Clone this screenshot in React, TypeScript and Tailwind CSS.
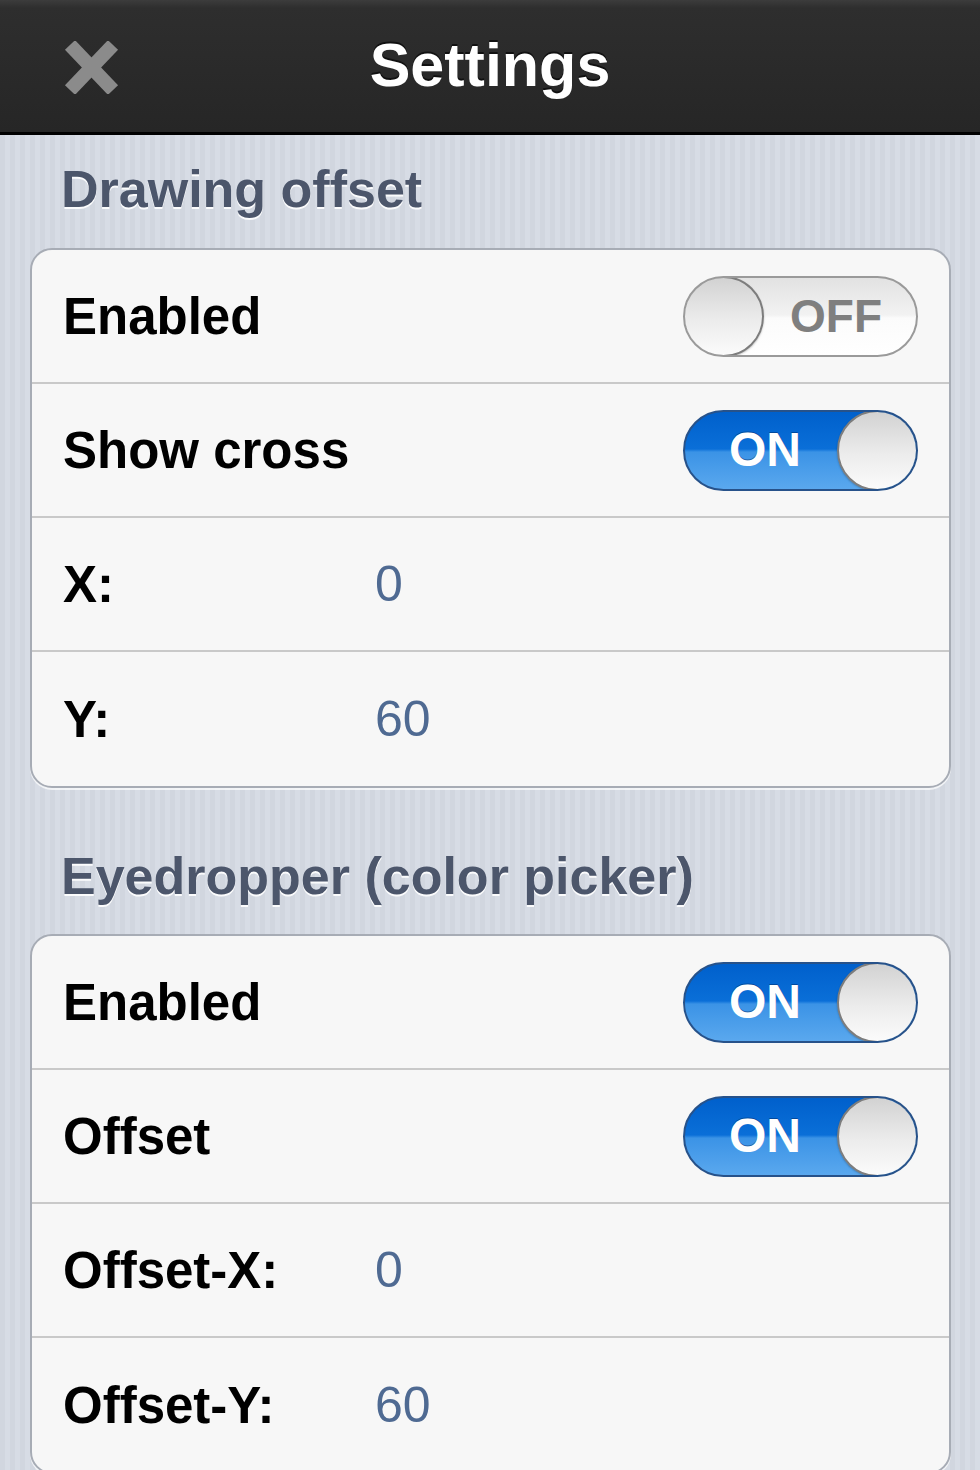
import React from 'react';

type Row =
    | { kind: 'toggle'; label: string; on: boolean }
    | { kind: 'value'; label: string; value: string };

const sections: { title: string; rows: Row[] }[] = [
    {
        title: 'Drawing offset',
        rows: [
            { kind: 'toggle', label: 'Enabled', on: false },
            { kind: 'toggle', label: 'Show cross', on: true },
            { kind: 'value', label: 'X:', value: '0' },
            { kind: 'value', label: 'Y:', value: '60' },
        ],
    },
    {
        title: 'Eyedropper (color picker)',
        rows: [
            { kind: 'toggle', label: 'Enabled', on: true },
            { kind: 'toggle', label: 'Offset', on: true },
            { kind: 'value', label: 'Offset-X:', value: '0' },
            { kind: 'value', label: 'Offset-Y:', value: '60' },
        ],
    },
];

const Knob: React.FC = () => (
    <div className="w-[81px] h-[81px] shrink-0 rounded-full border-2 border-[#7d7d7d] bg-[linear-gradient(180deg,#d2d2d2_0%,#ececec_55%,#fbfbfb_100%)] shadow-[0_1px_2px_rgba(0,0,0,0.25)]" />
);

const Toggle: React.FC<{ on: boolean }> = ({ on }) => {
    if (on) {
        return (
            <div className="relative w-[235px] h-[81px] rounded-full border-2 border-[#27528a] bg-[linear-gradient(180deg,#0060cc_0%,#0a6fd8_48%,#3b93e6_52%,#5aa8ee_100%)] flex items-center justify-between overflow-hidden">
                <span className="pl-[44px] text-[48px] leading-none font-bold text-white [text-shadow:0_-1px_0_rgba(0,40,100,0.5)]">ON</span>
                <div className="-mr-[2px]"><Knob /></div>
            </div>
        );
    }
    return (
        <div className="relative w-[235px] h-[81px] rounded-full border-2 border-[#9a9a9a] bg-[linear-gradient(180deg,#e2e2e2_0%,#f2f2f2_48%,#fbfbfb_52%,#ffffff_100%)] flex items-center justify-between overflow-hidden">
            <div className="-ml-[2px]"><Knob /></div>
            <span className="pr-[34px] text-[46px] leading-none font-bold text-[#7f7f7f]">OFF</span>
        </div>
    );
};

const SettingsRow: React.FC<{ row: Row; last: boolean }> = ({ row, last }) => (
    <div className={`h-[134px] flex items-center pl-[31px] pr-[31px] ${last ? '' : 'border-b-2 border-[#c9c9c9]'}`}>
        <div className="w-[312px] shrink-0 text-[51px] leading-none font-bold text-black">{row.label}</div>
        {row.kind === 'value' ? (
            <div className="text-[50px] leading-none text-[#4f6a92]">{row.value}</div>
        ) : (
            <div className="ml-auto">
                <Toggle on={row.on} />
            </div>
        )}
    </div>
);

const App: React.FC = () => {
    return (
        <div className="min-h-[1470px] font-['Liberation_Sans',Arial,sans-serif] bg-[repeating-linear-gradient(90deg,#d1d6df_0px,#d1d6df_5px,#d7dce5_5px,#d7dce5_10px)]">
            <div className="relative h-[135px] flex items-center justify-center bg-[linear-gradient(180deg,#3c3c3c_0%,#2e2e2e_6%,#262626_100%)] border-b-[3px] border-black">
                <svg className="absolute left-[64px] top-[41px]" width="55" height="53" viewBox="0 0 55 53">
                    <line x1="6" y1="4" x2="49" y2="49" stroke="#8b8b8b" strokeWidth="14" />
                    <line x1="49" y1="4" x2="6" y2="49" stroke="#8b8b8b" strokeWidth="14" />
                </svg>
                <h1 className="text-[61px] leading-none font-bold text-white -mt-[2px] [text-shadow:0_-2px_0_rgba(0,0,0,0.6)]">Settings</h1>
            </div>

            {sections.map((section, i) => (
                <div key={section.title}>
                    <div className={`${i === 0 ? 'h-[113px] pb-[33px]' : 'h-[146px] pb-[32px]'} flex items-end pl-[61px]`}>
                        <h2 className="text-[52px] leading-none font-bold text-[#4c566b] [text-shadow:0_2px_0_rgba(255,255,255,0.9)]">
                            {section.title}
                        </h2>
                    </div>
                    <div className="ml-[30px] mr-[29px] rounded-[22px] border-2 border-[#a7acb5] bg-[#f7f7f7] overflow-hidden shadow-[0_2px_0_rgba(255,255,255,0.7)]">
                        {section.rows.map((row, j) => (
                            <SettingsRow key={row.label} row={row} last={j === section.rows.length - 1} />
                        ))}
                    </div>
                </div>
            ))}
        </div>
    );
};

export default App;
